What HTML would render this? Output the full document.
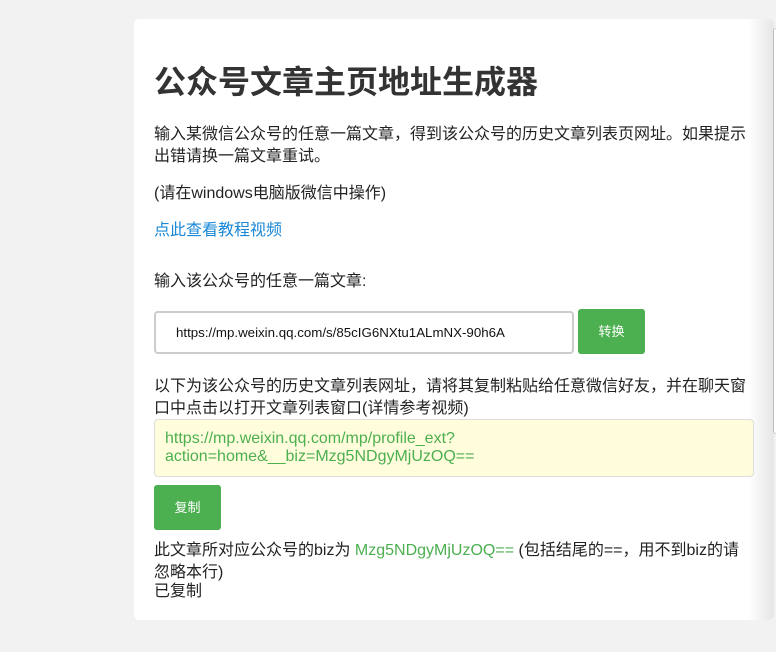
<!DOCTYPE html>
<html><head><meta charset="utf-8"><style>
*{margin:0;padding:0;box-sizing:border-box}
html,body{width:776px;height:652px;overflow:hidden;background:#f2f2f2;font-family:"Liberation Sans","Noto Sans CJK SC",sans-serif;color:#222}
.card{position:absolute;left:134px;top:19px;width:640px;height:601px;background:#fff;border-radius:5px;overflow:hidden}
.shade{position:absolute;right:0;top:0;width:26px;height:100%;background:linear-gradient(to right,rgba(235,235,235,0),#e6e6e6)}
.edge{position:absolute;left:773px;top:28px;width:3px;height:406px;border-left:1px solid #bbb;border-top:1px solid #ccc;border-bottom:1px solid #ccc;border-radius:4px 0 0 4px;background:#fff}
.a{position:absolute;font-size:16px;line-height:22px;white-space:nowrap}
h1{position:absolute;left:154px;top:62px;font-size:32px;font-weight:bold;color:#333;line-height:40px;white-space:nowrap}
.inp{position:absolute;left:154px;top:311px;width:420px;height:43px;border:2px solid #ccc;border-radius:4px;font-size:13.3px;line-height:39px;padding-left:20px;color:#111}
.btn{position:absolute;background:#4caf50;color:#fff;border-radius:3px;font-size:13px;text-align:center}
.ta{position:absolute;left:154px;top:419px;width:600px;height:58px;background:#fffddc;border:1px solid #ddd;border-radius:4px;color:#4caf50;font-size:16px;line-height:18px;padding:10px 10px}
.g{color:#4caf50}
</style></head><body>
<div class="card"><div class="shade"></div></div>
<div class="edge"></div>
<h1>公众号文章主页地址生成器</h1>
<div class="a" style="left:154px;top:124px">输入某微信公众号的任意一篇文章，得到该公众号的历史文章列表页网址。如果提示</div>
<div class="a" style="left:154px;top:146px">出错请换一篇文章重试。</div>
<div class="a" style="left:154px;top:183px">(请在windows电脑版微信中操作)</div>
<div class="a" style="left:154px;top:220px;color:#1a88d8">点此查看教程视频</div>
<div class="a" style="left:154px;top:271px">输入该公众号的任意一篇文章:</div>
<div class="inp">https://mp.weixin.qq.com/s/85cIG6NXtu1ALmNX-90h6A</div>
<div class="btn" style="left:578px;top:309px;width:67px;height:45px;line-height:45px">转换</div>
<div class="a" style="left:154px;top:376px">以下为该公众号的历史文章列表网址，请将其复制粘贴给任意微信好友，并在聊天窗</div>
<div class="a" style="left:154px;top:398px">口中点击以打开文章列表窗口(详情参考视频)</div>
<div class="ta">https://mp.weixin.qq.com/mp/profile_ext?<br>action=home&amp;__biz=Mzg5NDgyMjUzOQ==</div>
<div class="btn" style="left:154px;top:485px;width:67px;height:45px;line-height:45px">复制</div>
<div class="a" style="left:154px;top:540px">此文章所对应公众号的biz为 <span class="g">Mzg5NDgyMjUzOQ==</span> (包括结尾的==，用不到biz的请</div>
<div class="a" style="left:154px;top:562px">忽略本行)</div>
<div class="a" style="left:154px;top:581px">已复制</div>
</body></html>
